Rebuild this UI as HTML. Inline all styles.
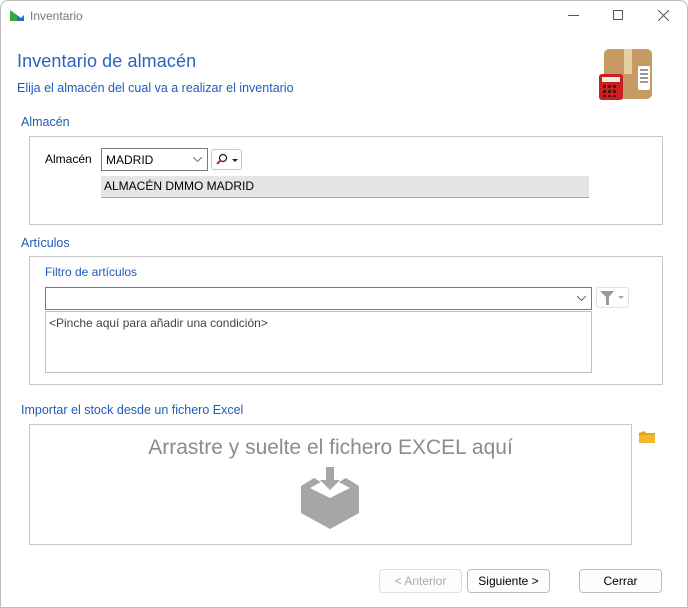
<!DOCTYPE html>
<html><head><meta charset="utf-8"><style>
*{box-sizing:border-box;margin:0;padding:0}
body{width:688px;height:608px;background:#fff;font-family:"Liberation Sans",sans-serif;font-size:12px;color:#000;position:relative;overflow:hidden}
.win{position:absolute;left:0;top:0;width:688px;height:608px;border:1px solid #bdbdbd;border-radius:8px 8px 0 0}
.a{position:absolute}
.blue{color:#1f5cb8}
.box{position:absolute;border:1px solid #c8c8c8}
.btn{position:absolute;height:24px;border:1px solid #bcbcbc;border-radius:4px;background:#fdfdfd;text-align:center;line-height:22px;font-size:12px}
</style></head><body><div class="win"></div>
<svg class="a" style="left:9px;top:8px" width="16" height="14"><path d="M1 2 L8 7 L8 13 L1 13Z" fill="#3aa648"/><path d="M8 7 L12 10 L15 7 L15 13 L8 13Z" fill="#2b6cc4"/></svg>
<div class="a" style="left:30px;top:9px;color:#777;font-size:12px">Inventario</div>
<div class="a" style="left:568px;top:15px;width:11px;height:1px;background:#555"></div>
<div class="a" style="left:613px;top:10px;width:10px;height:10px;border:1px solid #555"></div>
<svg class="a" style="left:658px;top:10px" width="11" height="11"><path d="M0 0L11 11M11 0L0 11" stroke="#555" stroke-width="1"/></svg>
<div class="a" style="left:17px;top:51px;font-size:18px;color:#2b63c1;font-weight:300;letter-spacing:0.1px">Inventario de almacén</div>
<div class="a blue" style="left:17px;top:81px;font-size:12.5px">Elija el almacén del cual va a realizar el inventario</div>
<svg class="a" style="left:598px;top:48px" width="58" height="56">
<rect x="6" y="1" width="48" height="50" rx="5" fill="#c69a63"/><rect x="26" y="1" width="8" height="25" fill="#e6cfa5"/>
<rect x="40" y="18" width="12" height="24" rx="2" fill="#fff"/><g stroke="#333"><line x1="42" y1="22" x2="50" y2="22"/><line x1="42" y1="26" x2="50" y2="26"/><line x1="42" y1="30" x2="50" y2="30"/><line x1="42" y1="34" x2="50" y2="34"/></g>
<rect x="1" y="26" width="24" height="26" rx="3" fill="#c82020"/><rect x="4" y="29" width="18" height="5" fill="#eee"/>
<g fill="#5a0d0d"><rect x="5" y="37" width="3" height="3"/><rect x="10" y="37" width="3" height="3"/><rect x="15" y="37" width="3" height="3"/><rect x="5" y="42" width="3" height="3"/><rect x="10" y="42" width="3" height="3"/><rect x="15" y="42" width="3" height="3"/><rect x="5" y="47" width="3" height="2"/><rect x="10" y="47" width="3" height="2"/><rect x="15" y="47" width="3" height="2"/></g></svg>
<div class="a blue" style="left:21px;top:115px;font-size:12.5px">Almacén</div>
<div class="box" style="left:29px;top:136px;width:634px;height:89px"></div>
<div class="a" style="left:45px;top:152px">Almacén</div>
<div class="a" style="left:101px;top:148px;width:107px;height:23px;border:1px solid #7a7a7a;padding:4px 0 0 4px">MADRID<svg style="position:absolute;right:5px;top:8px" width="9" height="5"><path d="M0 0L4.5 4.5L9 0" fill="none" stroke="#777"/></svg></div>
<div class="a" style="left:211px;top:149px;width:31px;height:21px;border:1px solid #c8c8c8;border-radius:3px"><svg width="30" height="20"><circle cx="11" cy="8" r="3.5" fill="none" stroke="#222" stroke-width="1.3"/><line x1="8.5" y1="10.5" x2="5" y2="14" stroke="#d22" stroke-width="2"/><path d="M20 9 L26 9 L23 12Z" fill="#222"/></svg></div>
<div class="a" style="left:101px;top:176px;width:488px;height:22px;background:#e5e5e5;border-bottom:1px solid #aaa;padding:3px 0 0 3px">ALMACÉN DMMO MADRID</div>
<div class="a blue" style="left:21px;top:236px;font-size:12.5px">Artículos</div>
<div class="box" style="left:29px;top:256px;width:634px;height:129px"></div>
<div class="a blue" style="left:45px;top:265px">Filtro de artículos</div>
<div class="a" style="left:45px;top:287px;width:547px;height:23px;border:1px solid #7a7a7a"><svg style="position:absolute;right:5px;top:8px" width="9" height="5"><path d="M0 0L4.5 4.5L9 0" fill="none" stroke="#666"/></svg></div>
<div class="a" style="left:45px;top:311px;width:547px;height:62px;border:1px solid #c0c0c0;padding:4px 3px;color:#444">&lt;Pinche aquí para añadir una condición&gt;</div>
<div class="a" style="left:596px;top:287px;width:33px;height:21px;border:1px solid #e0e0e0;border-radius:3px"><svg width="32" height="20"><path d="M3 3 L17 3 L12 9 L12 17 L9 17 L9 9Z" fill="#9a9a9a"/><path d="M21 8 L27 8 L24 11Z" fill="#aaa"/></svg></div>
<div class="a blue" style="left:21px;top:403px;font-size:12.5px">Importar el stock desde un fichero Excel</div>
<div class="box" style="left:29px;top:424px;width:603px;height:121px"></div>
<div class="a" style="left:29px;top:436px;width:603px;text-align:center;font-size:21px;color:#8c8c8c">Arrastre y suelte el fichero EXCEL aquí</div>
<svg class="a" style="left:300px;top:465px" width="60" height="64"><path d="M26 2 L34 2 L34 15 L40 15 L30 25 L20 15 L26 15Z" fill="#a6a6a6"/><path d="M14 13 L1 21 L1 48 L30 64 L59 48 L59 21 L46 13 L39 17 L50 23 L30 33 L10 23 L21 17Z" fill="#a6a6a6"/></svg>
<svg class="a" style="left:638px;top:430px" width="18" height="14"><path d="M1 3 L6 1 L8 3 L17 3 L17 13 L1 13Z" fill="#e6a417"/><rect x="1" y="5" width="16" height="8" fill="#f3b92c"/></svg>
<div class="btn" style="left:379px;top:569px;width:83px;color:#aaa;border-color:#ddd">&lt; Anterior</div>
<div class="btn" style="left:467px;top:569px;width:83px">Siguiente &gt;</div>
<div class="btn" style="left:579px;top:569px;width:83px">Cerrar</div>
</body></html>
